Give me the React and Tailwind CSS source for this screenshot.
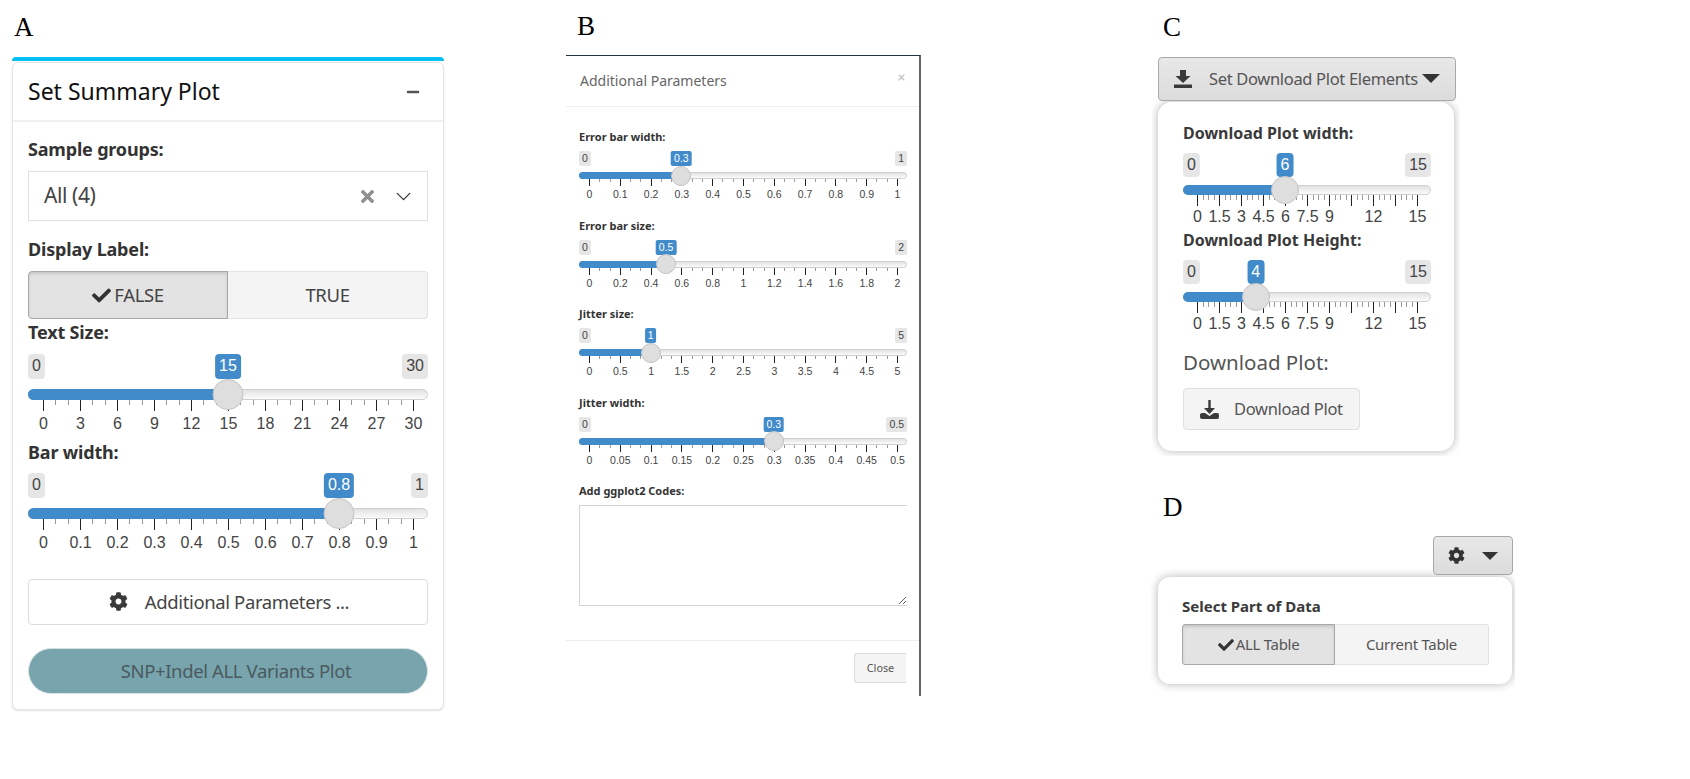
import React from "react";
import { FaCheck, FaCog, FaTimes, FaMinus } from "react-icons/fa";
import { LuChevronDown } from "react-icons/lu";

const LG = {
  tag: "h-[25px] px-[4px] text-[16px] leading-[24px] rounded-[4px]",
  track: "mt-[10px] h-[11px]",
  handle: "w-[31px] h-[31px]",
  handleTop: -21,
  tickH: 11,
  minorH: 5,
  sub: 3,
  labelTop: "mt-[4px] h-[18px] text-[16px] leading-[18px]",
};
const MD = {
  tag: "h-[24px] px-[4px] text-[16px] leading-[23px] rounded-[4px]",
  track: "mt-[8px] h-[10px]",
  handle: "w-[28px] h-[28px]",
  handleTop: -19,
  tickH: 11,
  minorH: 5,
  sub: 4,
  labelTop: "mt-[2px] h-[18px] text-[16px] leading-[18px]",
};
const SM = {
  tag: "h-[15px] px-[3px] text-[10.5px] leading-[14px] rounded-[2px]",
  track: "mt-[6px] h-[7px]",
  handle: "w-[20px] h-[20px]",
  handleTop: -13.5,
  tickH: 7,
  minorH: 3,
  sub: 3,
  labelTop: "mt-[1px] h-[14px] text-[10.5px] leading-[14px]",
};

function Slider({ v, width, x0, step, labels, pos, min, val, max, className }) {
  const px = x0 + pos * step;
  const n = labels.length - 1;
  const lines = [];
  for (let i = 0; i <= n * v.sub; i++) {
    const x = Math.round(x0 + (i * step) / v.sub) + 0.5;
    const major = i % v.sub === 0;
    lines.push(
      <line key={i} x1={x} x2={x} y1={0} y2={major ? v.tickH : v.minorH} stroke={major ? "#222" : "#999"} strokeWidth={1} />
    );
  }
  return (
    <div className={`font-['Liberation_Sans',sans-serif] text-[#333] ${className || ""}`} style={{ width }}>
      <div className="relative flex justify-between">
        <span className={`bg-[#e6e6e6] text-[#444] ${v.tag}`}>{min}</span>
        <span className={`absolute top-0 -translate-x-1/2 bg-[#428bca] text-white ${v.tag}`} style={{ left: px }}>
          {val}
        </span>
        <span className={`bg-[#e6e6e6] text-[#444] ${v.tag}`}>{max}</span>
      </div>
      <div className={`relative rounded-full border border-[#cfcfcf] bg-gradient-to-b from-[#e2e2e2] to-[#fbfbfb] ${v.track}`}>
        <div className="absolute -left-px -top-px -bottom-px rounded-l-full bg-[#428bca]" style={{ width: px }} />
      </div>
      <div className="relative">
        <svg width={width} height={v.tickH} className="block">
          {lines}
        </svg>
        <div
          className={`absolute -translate-x-1/2 rounded-full border border-[#c4c4c4] bg-[#dedede] ${v.handle}`}
          style={{ left: px, top: v.handleTop }}
        />
      </div>
      <div className={`relative ${v.labelTop}`}>
        {labels.map((l, i) => (
          <span key={i} className="absolute -translate-x-1/2 text-[#444]" style={{ left: x0 + i * step + 0.5 }}>
            {l}
          </span>
        ))}
      </div>
    </div>
  );
}

const Letter = ({ children, className }) => (
  <div className={`font-['Liberation_Serif',serif] text-[27px] leading-[30px] text-black ${className}`}>{children}</div>
);

const Caret = ({ w = 18, h = 9 }) => (
  <svg width={w} height={h} viewBox="0 0 18 9" className="block">
    <path d="M0 0h18L9 9z" fill="#333" />
  </svg>
);

const DownloadAlt = () => (
  <svg width="18" height="18" viewBox="0 0 18 18" className="block">
    <path d="M6 0h6v6h4.500L9 13 1.500 6H6z" fill="#3a3a3a" />
    <path d="M0 14.500h18V18H0z" fill="#3a3a3a" />
  </svg>
);

const DownloadRound = () => (
  <svg width="19" height="19" viewBox="0 0 19 19" className="block">
    <path d="M8.300 0h2.400v8h4.300l-5.500 6-5.500-6h4.300z" fill="#3a3a3a" />
    <path d="M2 13h3l4.500 3 4.500-3h3a2 2 0 0 1 2 2v2a2 2 0 0 1-2 2H2a2 2 0 0 1-2-2v-2a2 2 0 0 1 2-2z" fill="#3a3a3a" />
  </svg>
);

const Seg = ({ on, children, className }) => (
  <div
    className={`flex items-center justify-center ${
      on
        ? "bg-[#e3e3e3] border border-[#a8a8a8] shadow-[inset_0_2px_3px_rgba(0,0,0,0.12)]"
        : "bg-[#f4f4f4] border border-[#e2e2e2]"
    } ${className}`}
  >
    {children}
  </div>
);

const ALabel = ({ children, className }) => (
  <div className={`h-[24px] text-[18px] font-bold leading-[24px] tracking-[-0.01em] text-[#333] ${className || ""}`}>{children}</div>
);

function PanelA() {
  return (
    <div className="ml-[12px] w-[432px] shrink-0">
      <Letter className="h-[57px] pt-[12px] pl-[2px]">A</Letter>
      <div className="h-[4px] rounded-t-[4px] bg-[#00c0ef]" />
      <div className="mt-px h-[648px] rounded-[6px] border border-[#e4e4e4] bg-white shadow-[0_1px_2px_rgba(0,0,0,0.12)]">
        <div className="flex h-[59px] items-center justify-between border-b-2 border-[#f0f0f0] pl-[15px] pr-[23px]">
          <span className="text-[23px] text-[#111]">Set Summary Plot</span>
          <FaMinus className="text-[14px] text-[#555]" />
        </div>
        <div className="px-[15px] pt-[15px]">
          <ALabel>Sample groups:</ALabel>
          <div className="mt-[10px] flex h-[50px] items-center justify-between border border-[#dfdfdf] pl-[15px] pr-[11px]">
            <span className="text-[21px] text-[#444] tracking-[-0.02em]">All (4)</span>
            <span className="flex items-center gap-[14px]">
              <FaTimes className="text-[19px] text-[#909090]" />
              <LuChevronDown className="text-[25px] text-[#333]" strokeWidth={1.25} />
            </span>
          </div>
          <ALabel className="mt-[16px]">Display Label:</ALabel>
          <div className="mt-[10px] flex h-[48px] text-[18.5px] text-[#444] tracking-[-0.02em]">
            <Seg on className="w-[200px] rounded-l-[4px]">
              <FaCheck className="mr-[3px] text-[19px] text-[#333]" />
              FALSE
            </Seg>
            <Seg className="w-[200px] rounded-r-[4px] border-l-0">TRUE</Seg>
          </div>
          <ALabel className="mt-px">Text Size:</ALabel>
          <div className="h-[96px] pt-[10px]">
            <Slider v={LG} width={400} x0={15} step={37} pos={5} min="0" val="15" max="30"
              labels={["0", "3", "6", "9", "12", "15", "18", "21", "24", "27", "30"]} />
          </div>
          <ALabel>Bar width:</ALabel>
          <div className="h-[115px] pt-[9px]">
            <Slider v={LG} width={400} x0={15} step={37} pos={8} min="0" val="0.8" max="1"
              labels={["0", "0.1", "0.2", "0.3", "0.4", "0.5", "0.6", "0.7", "0.8", "0.9", "1"]} />
          </div>
          <div className="flex h-[46px] items-center justify-center rounded-[4px] border border-[#dcdcdc] pl-[2px] text-[18.5px] text-[#444] tracking-[-0.02em]">
            <FaCog className="mr-[17px] -translate-y-px text-[19px] text-[#3a3a3a]" />
            Additional Parameters ...
          </div>
          <div className="mt-[23px] flex h-[46px] items-center justify-center rounded-full border border-[#d8e2e4] bg-[#78a4ae] pl-[16px] text-[18.5px] text-[#4a5a5e] tracking-[-0.02em]">
            SNP+Indel ALL Variants Plot
          </div>
        </div>
      </div>
    </div>
  );
}

const SmLabel = ({ children, className }) => (
  <div className={`h-[16px] translate-y-px text-[11px] font-bold leading-[16px] text-[#333] ${className || ""}`}>{children}</div>
);

function PanelB() {
  const sets = [
    ["Error bar width:", 3, "0.3", "1", ["0", "0.1", "0.2", "0.3", "0.4", "0.5", "0.6", "0.7", "0.8", "0.9", "1"]],
    ["Error bar size:", 2.5, "0.5", "2", ["0", "0.2", "0.4", "0.6", "0.8", "1", "1.2", "1.4", "1.6", "1.8", "2"]],
    ["Jitter size:", 2, "1", "5", ["0", "0.5", "1", "1.5", "2", "2.5", "3", "3.5", "4", "4.5", "5"]],
    ["Jitter width:", 6, "0.3", "0.5", ["0", "0.05", "0.1", "0.15", "0.2", "0.25", "0.3", "0.35", "0.4", "0.45", "0.5"]],
  ];
  return (
    <div className="ml-[122px] w-[355px] shrink-0">
      <Letter className="h-[55px] pt-[11px] pl-[11px]">B</Letter>
      <div className="h-[641px] border-r-2 border-t border-r-[#666] border-t-[#22343f] bg-white">
        <div className="flex h-[51px] items-start justify-between border-b border-[#eee] pl-[14px] pr-[13px]">
          <span className="pt-[15px] text-[14px] leading-[20px] text-[#666]">Additional Parameters</span>
          <FaTimes className="mt-[17px] text-[9px] text-[#ccc]" />
        </div>
        <div className="pl-[13px] pr-[13px] pt-[21px]">
          {sets.map(([label, pos, val, max, labels]) => (
            <div key={label} className="h-[88.500px]">
              <SmLabel>{label}</SmLabel>
              <Slider v={SM} className="mt-[7px]" width={328} x0={10} step={30.8} pos={pos} min="0" val={val} max={max} labels={labels} />
            </div>
          ))}
          <SmLabel>Add ggplot2 Codes:</SmLabel>
          <textarea readOnly className="mt-[7px] block h-[101px] w-[328px] resize-y border border-r-0 border-[#d2d2dc] bg-white outline-none" />
        </div>
        <div className="mt-[34px] h-[54px] border-t border-[#eee] pr-[13px] pt-[12px]">
          <div className="ml-auto flex h-[30px] w-[52px] items-center justify-center rounded-l-[3px] border border-r-0 border-[#ddd] bg-[#f4f4f4] text-[10.8px] text-[#555]">
            Close
          </div>
        </div>
      </div>
    </div>
  );
}

const CLabel = ({ children }) => (
  <div className="h-[24px] text-[16px] font-bold leading-[24px] text-[#3a3a3a]">{children}</div>
);

function PanelCD() {
  return (
    <div className="ml-[231px] w-[365px] shrink-0">
      <Letter className="h-[57px] pt-[12px] pl-[11px]">C</Letter>
      <div className="ml-[6px] flex h-[44px] w-[298px] items-center rounded-[4px] border border-[#a8a8a8] bg-gradient-to-b from-[#e8e8e8] to-[#dcdcdc] pl-[15px] text-[16.500px] text-[#555] tracking-[-0.02em]">
        <DownloadAlt />
        <span className="ml-[17px]">Set Download Plot Elements</span>
        <span className="ml-[4px] -translate-y-px"><Caret /></span>
      </div>
      <div className="h-[355px] w-[308px] overflow-hidden px-[6px] pt-[1px]">
        <div className="h-[349px] rounded-[14px] bg-white pl-[25px] pt-[19px] shadow-[0_0_10px_rgba(0,0,0,0.3)]">
          <CLabel>Download Plot width:</CLabel>
          <div className="h-[83px] pt-[8px]">
            <Slider v={MD} width={248} x0={14} step={22} pos={4} min="0" val="6" max="15"
              labels={["0", "1.5", "3", "4.5", "6", "7.5", "9", "", "12", "", "15"]} />
          </div>
          <CLabel>Download Plot Height:</CLabel>
          <div className="h-[95px] pt-[8px]">
            <Slider v={MD} width={248} x0={14} step={22} pos={2.67} min="0" val="4" max="15"
              labels={["0", "1.5", "3", "4.5", "6", "7.5", "9", "", "12", "", "15"]} />
          </div>
          <div className="h-[30px] text-[20.500px] leading-[30px] text-[#555]">Download Plot:</div>
          <div className="mt-[11px] flex h-[42px] w-[177px] items-center rounded-[4px] border border-[#e0e0e0] bg-[#f4f4f4] pl-[16px] text-[16.500px] text-[#555] tracking-[-0.02em]">
            <DownloadRound />
            <span className="ml-[15px]">Download Plot</span>
          </div>
        </div>
      </div>
      <Letter className="mt-[36px] h-[44px] pl-[11px]">D</Letter>
      <div className="relative z-10 ml-[281px] flex h-[39px] w-[80px] items-center justify-center gap-[17px] rounded-[4px] border border-[#a8a8a8] bg-gradient-to-b from-[#e8e8e8] to-[#dcdcdc]">
        <FaCog className="text-[17px] text-[#333]" />
        <Caret w={16} h={8} />
      </div>
      <div className="-ml-[2px] -mt-[15px] h-[132px] w-[365px] overflow-hidden pl-[8px] pt-[17px]">
        <div className="h-[107px] w-[354px] rounded-[12px] bg-white pl-[24px] pt-[18px] shadow-[0_0_10px_rgba(0,0,0,0.3)]">
          <div className="h-[22px] text-[15px] font-bold leading-[22px] text-[#3a3a3a]">Select Part of Data</div>
          <div className="mt-[7px] flex h-[41px] w-[307px] text-[15px] text-[#555] tracking-[-0.02em]">
            <Seg on className="w-[153px] rounded-l-[3px]">
              <FaCheck className="mr-[2px] text-[16px] text-[#333]" />
              ALL Table
            </Seg>
            <Seg className="w-[154px] rounded-r-[3px] border-l-0">Current Table</Seg>
          </div>
        </div>
      </div>
    </div>
  );
}

export default function App() {
  return (
    <div className="flex h-[779px] w-[1690px] items-start overflow-hidden bg-white font-['Noto_Sans',sans-serif]">
      <PanelA />
      <PanelB />
      <PanelCD />
    </div>
  );
}
